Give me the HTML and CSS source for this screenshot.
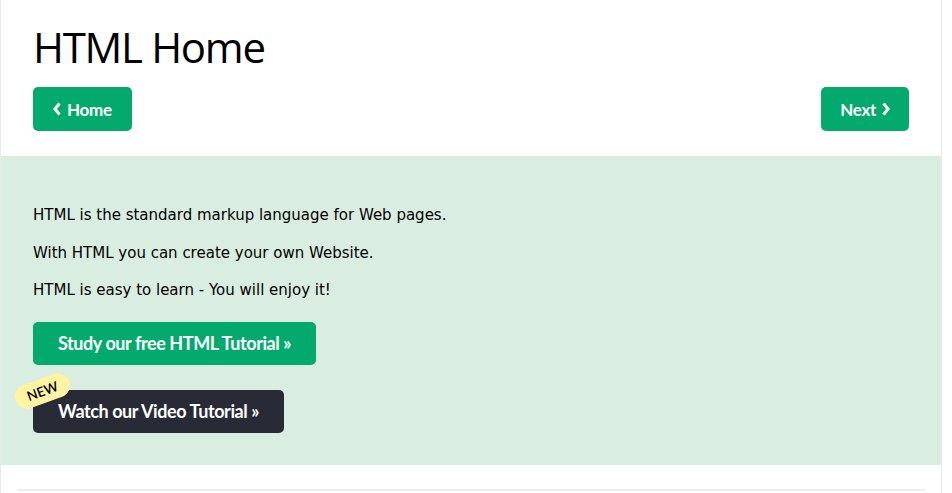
FILE: index.html
```html
<!DOCTYPE html>
<html lang="en">
<head>
<meta charset="utf-8">
<title>HTML Home</title>
<link rel="stylesheet" href="styles.css">
</head>
<body>
<div class="main">
  <header class="page-head">
    <h1 class="title">HTML Home</h1>
    <nav class="pager">
      <a class="btn btn-nav" href="#"><svg class="chev" viewBox="0 0 8 14" width="8" height="14"><path d="M6.5 1.5 L2 7 L6.5 12.5" fill="none" stroke="#fff" stroke-width="3" stroke-linejoin="miter"/></svg>Home</a>
      <a class="btn btn-nav" href="#">Next<svg class="chev" viewBox="0 0 8 14" width="8" height="14"><path d="M1.5 1.5 L6 7 L1.5 12.5" fill="none" stroke="#fff" stroke-width="3" stroke-linejoin="miter"/></svg></a>
    </nav>
  </header>
  <section class="intro">
    <p>HTML is the standard markup language for Web pages.</p>
    <p>With HTML you can create your own Website.</p>
    <p>HTML is easy to learn - You will enjoy it!</p>
    <div class="cta-list">
      <a class="btn btn-cta" href="#">Study our free HTML Tutorial »</a>
      <div class="cta-wrap">
        <span class="badge">NEW</span>
        <a class="btn btn-cta btn-dark" href="#">Watch our Video Tutorial »</a>
      </div>
    </div>
  </section>
  <hr class="rule">
</div>
</body>
</html>
```
FILE: styles.css
```css
* { box-sizing: border-box; }
html, body { margin: 0; padding: 0; background: #fff; }
body { font-family: "DejaVu Sans", Verdana, sans-serif; color: #000; }

.main {
  width: 942px;
  border-left: 1px solid #e7e9eb;
  border-right: 1px solid #e7e9eb;
  min-height: 493px;
  overflow: hidden;
}

.page-head { padding: 22px 32px 25px; }

.title {
  margin: 0;
  font-family: "Open Sans", "Segoe UI", sans-serif;
  font-weight: 400;
  font-size: 42px;
  line-height: 50px;
  letter-spacing: -1.3px;
}

.pager {
  display: flex;
  justify-content: space-between;
  margin-top: 15px;
}

.btn {
  display: inline-flex;
  align-items: center;
  justify-content: center;
  text-decoration: none;
  color: #fff;
  background: #04AA6D;
  border-radius: 5px;
  font-family: "Lato", "Source Sans Pro", sans-serif;
  font-weight: 700;
}

.btn-nav {
  height: 44px;
  padding: 0 20px 0 20px;
  font-size: 17px;
  letter-spacing: -0.3px;
  gap: 6px;
}
.btn-nav:last-child { padding: 0 19px 0 19px; }

.chev { display: block; }

.intro {
  background: #D9EEE1;
  padding: 48px 32px 32px;
  font-size: 15px;
  line-height: 22.5px;
  color: #000;
}

.intro p { margin: 0 0 15px; }

.cta-list { margin-top: 20px; display: flex; flex-direction: column; align-items: flex-start; gap: 25px; }

.btn-cta {
  height: 43px;
  padding: 0 25px;
  font-size: 18px;
  letter-spacing: -0.42px;
}

.btn-dark { background: #282A35; }

.cta-wrap { position: relative; }

.badge {
  position: absolute;
  left: -19px;
  top: -11px;
  width: 57px;
  height: 24px;
  border-radius: 12px;
  background: #FFF4A3;
  color: #000;
  font-family: "Lato", "Source Sans Pro", sans-serif;
  font-weight: 600;
  font-size: 13.5px;
  line-height: 24px;
  text-align: center;
  transform: rotate(-20deg);
  z-index: 2;
}

.rule {
  margin: 24px 16px 0;
  border: 0;
  border-top: 2px solid #eee;
  height: 0;
}
```
